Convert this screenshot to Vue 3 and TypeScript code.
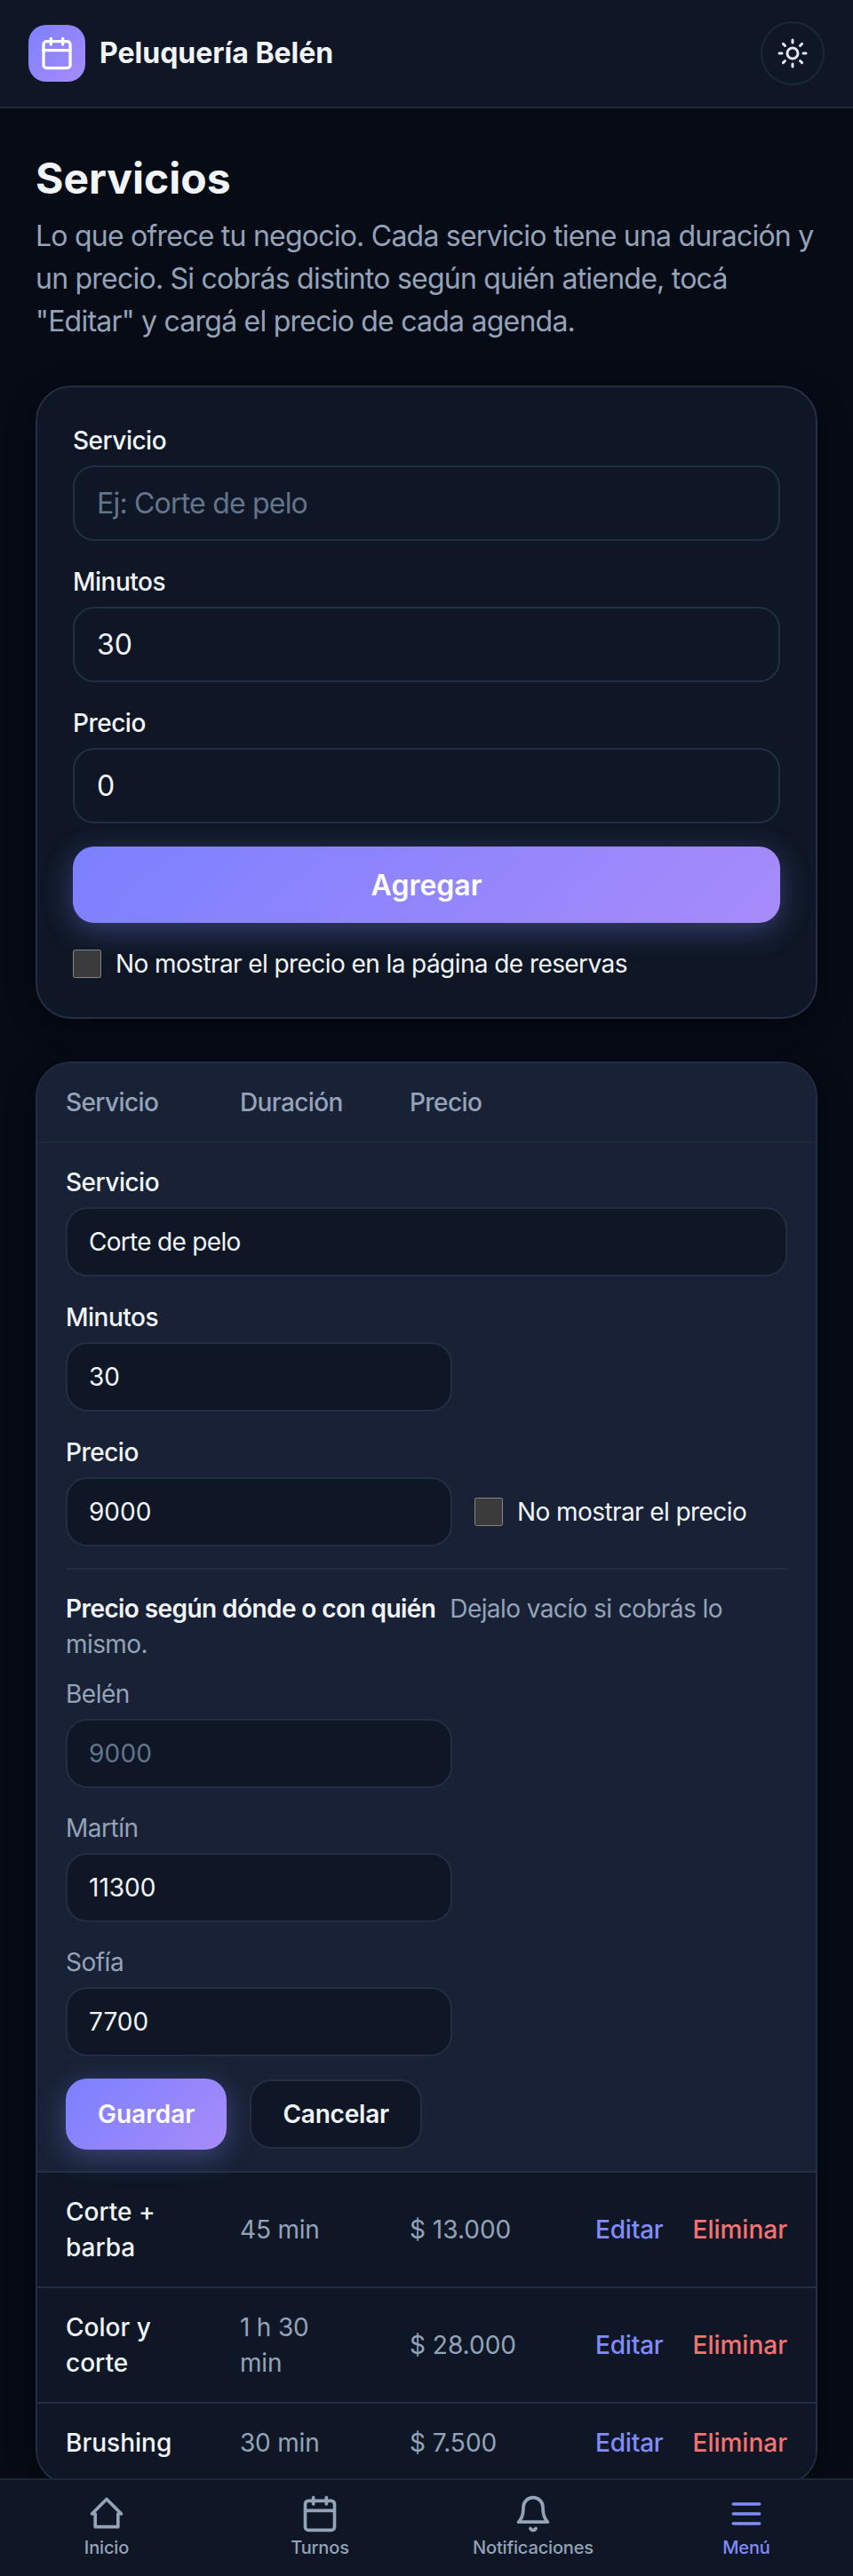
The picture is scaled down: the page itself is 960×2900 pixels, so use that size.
<script setup lang="ts">
interface Service {
  name: string;
  duration: string;
  price: string;
}

interface AgendaPrice {
  name: string;
  value: string;
  placeholder?: string;
}

const services: Service[] = [
  { name: "Corte + barba", duration: "45 min", price: "$ 13.000" },
  { name: "Color y corte", duration: "1 h 30 min", price: "$ 28.000" },
  { name: "Brushing", duration: "30 min", price: "$ 7.500" },
];

const agendas: AgendaPrice[] = [
  { name: "Belén", value: "", placeholder: "9000" },
  { name: "Martín", value: "11300" },
  { name: "Sofía", value: "7700" },
];
</script>

<template>
  <div class="app">
    <header class="topbar">
      <div class="brand">
        <span class="logo">
          <svg width="40" height="40" viewBox="0 0 24 24" fill="none" stroke="#fff" stroke-width="2" stroke-linecap="round" stroke-linejoin="round">
            <rect x="3" y="4" width="18" height="18" rx="2" />
            <path d="M16 2v4M8 2v4M3 10h18" />
          </svg>
        </span>
        <span class="brand-name">Peluquería Belén</span>
      </div>
      <button class="theme-btn" type="button" aria-label="Cambiar tema">
        <svg width="36" height="36" viewBox="0 0 24 24" fill="none" stroke="currentColor" stroke-width="2" stroke-linecap="round" stroke-linejoin="round">
          <circle cx="12" cy="12" r="4" />
          <path d="M12 2v2M12 20v2M4.93 4.93l1.41 1.41M17.66 17.66l1.41 1.41M2 12h2M20 12h2M6.34 17.66l-1.41 1.41M19.07 4.93l-1.41 1.41" />
        </svg>
      </button>
    </header>

    <main class="page">
      <h1>Servicios</h1>
      <p class="intro">
        Lo que ofrece tu negocio. Cada servicio tiene una duración y un precio. Si cobrás distinto según quién
        atiende, tocá "Editar" y cargá el precio de cada agenda.
      </p>

      <form class="card new-form" @submit.prevent>
        <label class="field">
          <span class="field-label">Servicio</span>
          <input class="input" type="text" placeholder="Ej: Corte de pelo" />
        </label>
        <label class="field">
          <span class="field-label">Minutos</span>
          <input class="input" type="text" value="30" />
        </label>
        <label class="field">
          <span class="field-label">Precio</span>
          <input class="input" type="text" value="0" />
        </label>
        <button class="btn-primary wide" type="submit">Agregar</button>
        <label class="check">
          <input type="checkbox" />
          <span>No mostrar el precio en la página de reservas</span>
        </label>
      </form>

      <section class="card list">
        <div class="row head">
          <span>Servicio</span>
          <span>Duración</span>
          <span>Precio</span>
        </div>

        <form class="edit" @submit.prevent>
          <label class="field">
            <span class="field-label">Servicio</span>
            <input class="input small text-value" type="text" value="Corte de pelo" />
          </label>
          <label class="field half">
            <span class="field-label">Minutos</span>
            <input class="input small" type="text" value="30" />
          </label>
          <div class="price-line">
            <label class="field half">
              <span class="field-label">Precio</span>
              <input class="input small" type="text" value="9000" />
            </label>
            <label class="check inline">
              <input type="checkbox" />
              <span>No mostrar el precio</span>
            </label>
          </div>
          <div class="agenda-note">
            <strong>Precio según dónde o con quién</strong>
            <span>Dejalo vacío si cobrás lo mismo.</span>
          </div>
          <label v-for="a in agendas" :key="a.name" class="field half agenda">
            <span class="field-label muted">{{ a.name }}</span>
            <input class="input small" type="text" :value="a.value" :placeholder="a.placeholder" />
          </label>
          <div class="edit-actions">
            <button class="btn-primary" type="submit">Guardar</button>
            <button class="btn-ghost" type="button">Cancelar</button>
          </div>
        </form>

        <div v-for="s in services" :key="s.name" class="row item">
          <span class="name">{{ s.name }}</span>
          <span class="duration">{{ s.duration }}</span>
          <span class="price">{{ s.price }}</span>
          <span class="actions">
            <a class="edit-link">Editar</a>
            <a class="del-link">Eliminar</a>
          </span>
        </div>
      </section>
    </main>

    <nav class="bottom-nav">
      <a class="nav-item">
        <svg width="44" height="44" viewBox="0 0 24 24" fill="none" stroke="currentColor" stroke-width="2" stroke-linecap="round" stroke-linejoin="round">
          <path d="M3 12l9-9 9 9h-2v8H5v-8H3z" />
        </svg>
        <span>Inicio</span>
      </a>
      <a class="nav-item">
        <svg width="44" height="44" viewBox="0 0 24 24" fill="none" stroke="currentColor" stroke-width="2" stroke-linecap="round" stroke-linejoin="round">
          <rect x="3" y="4" width="18" height="18" rx="2" />
          <path d="M16 2v4M8 2v4M3 10h18" />
        </svg>
        <span>Turnos</span>
      </a>
      <a class="nav-item">
        <svg width="44" height="44" viewBox="0 0 24 24" fill="none" stroke="currentColor" stroke-width="2" stroke-linecap="round" stroke-linejoin="round">
          <path d="M6 8a6 6 0 0 1 12 0c0 7 3 9 3 9H3s3-2 3-9" />
          <path d="M13.73 21a2 2 0 0 1-3.46 0" />
        </svg>
        <span>Notificaciones</span>
      </a>
      <a class="nav-item active">
        <svg width="44" height="44" viewBox="0 0 24 24" fill="none" stroke="currentColor" stroke-width="2" stroke-linecap="round" stroke-linejoin="round">
          <path d="M4 6h16M4 12h16M4 18h16" />
        </svg>
        <span>Menú</span>
      </a>
    </nav>
  </div>
</template>

<style>
body {
  background: #060b16;
}
</style>

<style scoped>
.app {
  height: 2900px;
  overflow: hidden;
  background: #060b16;
  color: #f1f5f9;
  font-family: Inter, "Liberation Sans", sans-serif;
  color-scheme: dark;
}
.topbar {
  height: 122px;
  box-sizing: border-box;
  display: flex;
  align-items: center;
  justify-content: space-between;
  padding: 0 32px;
  background: #0f1626;
  border-bottom: 2px solid #1e2739;
}
.brand {
  display: flex;
  align-items: center;
  gap: 16px;
}
.logo {
  width: 64px;
  height: 64px;
  border-radius: 20px;
  display: flex;
  align-items: center;
  justify-content: center;
  background: linear-gradient(135deg, #7c80ff, #a78bfa);
}
.brand-name {
  font-size: 32px;
  font-weight: 700;
  color: #f1f5f9;
  padding-bottom: 2px;
}
.theme-btn {
  width: 72px;
  height: 72px;
  padding: 0;
  display: flex;
  align-items: center;
  justify-content: center;
  border-radius: 50%;
  border: 2px solid #1e2739;
  background: transparent;
  color: #e2e8f0;
}
.page {
  padding: 49px 40px 0;
}
h1 {
  margin: 0;
  font-size: 48px;
  line-height: 60px;
  font-weight: 700;
  color: #f1f5f9;
}
.intro {
  margin: 11px 0 48px;
  font-size: 32px;
  letter-spacing: -0.77px;
  line-height: 48px;
  color: #94a3b8;
}
.card {
  background: #0f1726;
  border: 2px solid #232e43;
  border-radius: 40px;
  box-shadow: 0 8px 32px rgba(0, 0, 0, 0.45);
}
.new-form {
  padding: 40px;
  display: flex;
  flex-direction: column;
  gap: 26px;
}
.field {
  display: flex;
  flex-direction: column;
  gap: 8px;
}
.field-label {
  font-size: 28px;
  line-height: 40px;
  font-weight: 500;
  letter-spacing: -0.5px;
  color: #f1f5f9;
}
.field-label.muted {
  font-weight: 400;
  color: #94a3b8;
}
.input {
  width: 100%;
  height: 85px;
  box-sizing: border-box;
  padding: 0 25px;
  font: inherit;
  font-size: 32px;
  color: #f1f5f9;
  background: #0f1726;
  border: 2px solid #232e43;
  border-radius: 24px;
  outline: none;
}
.input::placeholder {
  color: #64748b;
  opacity: 1;
  letter-spacing: -0.8px;
}
.input.small {
  height: 78px;
  padding: 0 24px;
  font-size: 28px;
}
.input.small::placeholder {
  letter-spacing: 0.2px;
}
.input.text-value {
  letter-spacing: -0.7px;
}
.btn-primary {
  font: inherit;
  font-size: 28px;
  font-weight: 600;
  color: #fff;
  height: 80px;
  padding: 0 36px;
  border: none;
  border-radius: 24px;
  background: linear-gradient(135deg, #7c80ff, #a78bfa);
  box-shadow: 0 8px 32px rgba(129, 140, 248, 0.35);
}
.btn-primary.wide {
  height: 86px;
  font-size: 32px;
  width: 100%;
}
.btn-ghost {
  font: inherit;
  font-size: 28px;
  font-weight: 600;
  letter-spacing: -0.2px;
  color: #f1f5f9;
  height: 78px;
  padding: 0 35px;
  background: #0f1726;
  border: 2px solid #232e43;
  border-radius: 24px;
}
.check {
  display: flex;
  align-items: center;
  gap: 16px;
  font-size: 28px;
  line-height: 40px;
  letter-spacing: -0.58px;
  color: #f1f5f9;
}
.check input {
  width: 32px;
  height: 32px;
  margin: 0;
  flex-shrink: 0;
}
.list {
  margin-top: 48px;
  overflow: hidden;
}
.row {
  display: grid;
  grid-template-columns: 196px 191px 1fr auto;
  align-items: center;
  padding: 0 32px;
  font-size: 28px;
  line-height: 40px;
}
.row.head {
  height: 90px;
  box-sizing: border-box;
  background: #182135;
  border-bottom: 2px solid #1e293b;
  color: #94a3b8;
  font-weight: 500;
  letter-spacing: -0.6px;
}
.edit {
  background: #182135;
  padding: 24px 32px 24px;
  border-bottom: 2px solid #232e43;
  display: flex;
  flex-direction: column;
}
.edit .field + .field {
  margin-top: 26px;
}
.edit .agenda + .agenda {
  margin-top: 25px;
}
.half {
  width: 435px;
}
.price-line {
  display: flex;
  align-items: flex-end;
  gap: 25px;
  margin-top: 26px;
  padding-bottom: 24px;
  border-bottom: 2px solid #232e43;
}
.check.inline {
  height: 78px;
}
.agenda-note {
  margin: 24px 0 16px;
  font-size: 28px;
  line-height: 40px;
  letter-spacing: -0.58px;
  color: #94a3b8;
}
.agenda-note strong {
  font-weight: 600;
  color: #f1f5f9;
  margin-right: 16px;
}
.edit-actions {
  display: flex;
  align-items: center;
  gap: 26px;
  margin-top: 25px;
}
.row.item {
  padding-top: 24px;
  padding-bottom: 24px;
  border-bottom: 2px solid #232e43;
  background: #0f1726;
}
.name {
  font-weight: 500;
  color: #f1f5f9;
  padding-right: 64px;
}
.duration {
  color: #94a3b8;
  padding-right: 90px;
  letter-spacing: -0.2px;
}
.price {
  color: #94a3b8;
}
.actions {
  display: flex;
  gap: 33px;
  font-weight: 500;
}
.edit-link {
  color: #818cf8;
  letter-spacing: -0.2px;
}
.del-link {
  color: #f87171;
}
.bottom-nav {
  position: fixed;
  left: 0;
  right: 0;
  bottom: 0;
  height: 110px;
  box-sizing: border-box;
  display: grid;
  grid-template-columns: repeat(4, 1fr);
  background: #0f1626;
  border-top: 2px solid #1e2739;
}
.nav-item {
  display: flex;
  flex-direction: column;
  align-items: center;
  padding-top: 16px;
  color: #94a3b8;
  font-size: 20px;
  line-height: 28px;
  font-weight: 500;
  letter-spacing: -0.15px;
}
.nav-item span {
  margin-top: 2px;
}
.nav-item.active {
  color: #818cf8;
}
</style>
